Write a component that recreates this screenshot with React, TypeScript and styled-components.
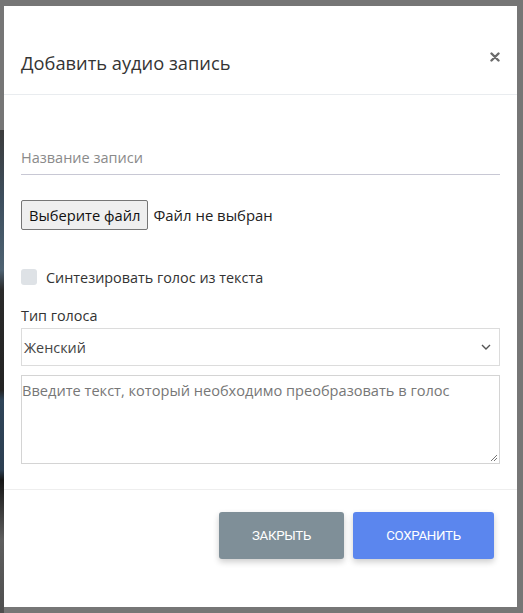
import styled, { createGlobalStyle } from 'styled-components';

const GlobalStyle = createGlobalStyle`
  html, body {
    margin: 0;
    padding: 0;
    background: #767676;
  }
  * {
    box-sizing: border-box;
  }
`;

const Backdrop = styled.div`
  width: 523px;
  height: 613px;
  background: #767676;
  padding: 6px 6px 6px 4px;
  display: flex;
  position: relative;
  overflow: hidden;
`;

const BehindStrip = styled.div`
  position: absolute;
  left: 0;
  top: 0;
  width: 4px;
  height: 613px;
  background: linear-gradient(
    180deg,
    #767676 0px,
    #767676 130px,
    #3c3c3c 130px,
    #3d4f5e 200px,
    #4e6272 270px,
    #2a2a2a 290px,
    #232323 390px,
    #2f4458 400px,
    #2c3f52 470px,
    #161616 480px,
    #5e5e5e 540px,
    #4f4f4f 613px
  );
`;

const Modal = styled.div`
  width: 513px;
  height: 601px;
  background: #ffffff;
  display: flex;
  flex-direction: column;
  font-family: 'Open Sans', 'Noto Sans', sans-serif;
  color: #333;
  position: relative;
  z-index: 1;
`;

const Header = styled.div`
  height: 89px;
  padding: 24px 15px 0 17px;
  display: flex;
  align-items: center;
  justify-content: space-between;
  border-bottom: 1px solid #e9ecef;
`;

const Title = styled.h4`
  margin: 0;
  font-size: 18.3px;
  font-weight: 400;
  color: #343434;
  line-height: 27px;
`;

const CloseButton = styled.button`
  border: none;
  background: none;
  padding: 0;
  margin-top: -10px;
  width: 14px;
  height: 14px;
  display: flex;
  align-items: center;
  justify-content: center;
  cursor: pointer;
`;

const Body = styled.div`
  padding: 44px 17px 0 17px;
  display: flex;
  flex-direction: column;
  height: 395px;
  border-bottom: 1px solid #eeeeee;
  font-size: 14.4px;
`;

const TextInput = styled.input`
  height: 36px;
  border: none;
  border-bottom: 1px solid #c8c8d4;
  padding: 2px 0 0 0;
  font-family: inherit;
  font-size: 14.5px;
  color: #333;
  outline: none;
  &::placeholder {
    color: #8a8a8a;
  }
`;

const FileRow = styled.div`
  margin-top: 25px;
  display: flex;
  align-items: center;
  gap: 5px;
  color: #222;
  font-size: 14.9px;
`;

const FileButton = styled.button`
  height: 30px;
  padding: 0 7px;
  background: #efefef;
  border: 1px solid #767676;
  border-radius: 2px;
  font-family: inherit;
  font-size: 14.7px;
  color: #111;
`;

const CheckRow = styled.label`
  margin-top: 38px;
  display: flex;
  align-items: center;
  gap: 9px;
  color: #333;
  height: 18px;
`;

const CheckBox = styled.span`
  width: 16px;
  height: 16px;
  border-radius: 3px;
  background: #dee2e6;
  display: inline-block;
`;

const FieldLabel = styled.div`
  margin-top: 19px;
  color: #333;
  line-height: 22px;
`;

const SelectBox = styled.div`
  margin-top: 1px;
  height: 38px;
  border: 1px solid #dcdcdc;
  display: flex;
  align-items: center;
  justify-content: space-between;
  padding: 0 8px 0 2px;
  color: #444;
`;

const TextArea = styled.div`
  margin-top: 9px;
  height: 89px;
  border: 1px solid #d4d4d4;
  padding: 4px 0 0 0;
  color: #777;
  font-size: 14.6px;
  position: relative;
`;

const Grip = styled.svg`
  position: absolute;
  right: 1px;
  bottom: 1px;
`;

const Footer = styled.div`
  flex: 1;
  display: flex;
  justify-content: flex-end;
  align-items: flex-start;
  padding: 22px 23px 0 0;
  gap: 9px;
`;

const ActionButton = styled.button<{ $primary?: boolean; $width: number }>`
  width: ${({ $width }) => $width}px;
  height: 47px;
  border: none;
  border-radius: 3px;
  background: ${({ $primary }) => ($primary ? '#5b86ee' : '#7f8f98')};
  color: #fff;
  font-family: 'Roboto', sans-serif;
  font-size: 13.3px;
  letter-spacing: -0.3px;
  text-transform: uppercase;
  box-shadow: 0 3px 6px rgba(0, 0, 0, 0.2);
  cursor: pointer;
`;

export default function App() {
  return (
    <>
      <GlobalStyle />
      <Backdrop>
        <BehindStrip />
        <Modal>
          <Header>
            <Title>Добавить аудио запись</Title>
            <CloseButton aria-label="close">
              <svg width="10" height="10" viewBox="0 0 10 10">
                <path d="M1.5 1.5 L8.5 8.5 M8.5 1.5 L1.5 8.5" stroke="#6b6b6b" strokeWidth="2.4" strokeLinecap="round" />
              </svg>
            </CloseButton>
          </Header>
          <Body>
            <TextInput placeholder="Название записи" />
            <FileRow>
              <FileButton>Выберите файл</FileButton>
              <span>Файл не выбран</span>
            </FileRow>
            <CheckRow>
              <CheckBox />
              <span>Синтезировать голос из текста</span>
            </CheckRow>
            <FieldLabel>Тип голоса</FieldLabel>
            <SelectBox>
              <span>Женский</span>
              <svg width="10" height="6" viewBox="0 0 10 6">
                <path d="M1 1 L5 5 L9 1" fill="none" stroke="#555" strokeWidth="1.4" />
              </svg>
            </SelectBox>
            <TextArea>
              Введите текст, который необходимо преобразовать в голос
              <Grip width="8" height="8" viewBox="0 0 8 8">
                <path d="M7 1 L1 7 M7 4 L4 7" stroke="#777" strokeWidth="1" />
              </Grip>
            </TextArea>
          </Body>
          <Footer>
            <ActionButton $width={125}>Закрыть</ActionButton>
            <ActionButton $primary $width={141}>Сохранить</ActionButton>
          </Footer>
        </Modal>
      </Backdrop>
    </>
  );
}
